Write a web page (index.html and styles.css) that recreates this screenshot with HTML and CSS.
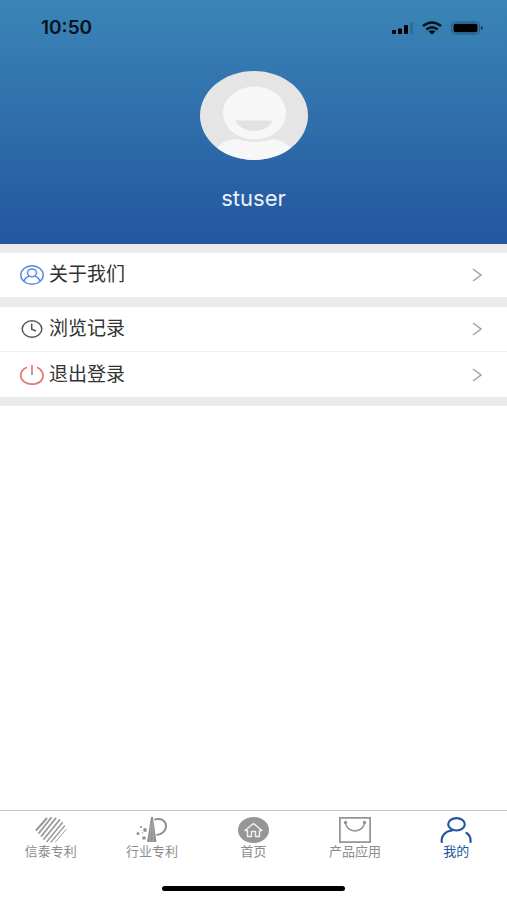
FILE: index.html
```html
<!DOCTYPE html>
<html lang="zh-CN">
<head>
<meta charset="utf-8">
<meta name="viewport" content="width=device-width, initial-scale=1">
<title>我的</title>
<link rel="stylesheet" href="styles.css">
</head>
<body>
<header class="profile">
  <div class="status">
    <time class="clock">10:50</time>
    <div class="signals">
      <svg width="21" height="14" viewBox="0 0 21 14" aria-hidden="true">
        <rect x="0" y="9" width="4" height="4" rx="1"/>
        <rect x="6" y="7.500" width="4" height="5.500" rx="1"/>
        <rect x="12" y="4" width="4" height="9" rx="1"/>
        <rect x="18" y="1" width="3" height="12" rx="1" opacity=".16"/>
      </svg>
      <svg width="20" height="14" viewBox="0 0 20 14" aria-hidden="true">
        <g fill="none" stroke="#06121c" stroke-width="2.400"><path d="M1 5Q10-2 19 5"/><path d="M4.300 8.500Q10 4 15.700 8.500"/></g>
        <path d="M6.500 10.500Q10 7.800 13.500 10.500L10 13.600Z"/>
      </svg>
      <svg width="32" height="14" viewBox="0 0 32 14" aria-hidden="true">
        <rect x=".6" y="1" width="28" height="12" rx="4" fill="none" stroke="#163f61" stroke-opacity=".65"/>
        <rect x="2.500" y="2.800" width="24" height="8.400" rx="2"/>
        <path d="M30 5Q32 6 32 7T30 9Z" opacity=".6"/>
      </svg>
    </div>
  </div>
  <svg class="avatar" width="108" height="89" viewBox="0 0 108 89" role="img" aria-label="头像">
    <defs><clipPath id="face"><ellipse cx="54" cy="44.500" rx="54" ry="44.500"/></clipPath></defs>
    <g clip-path="url(#face)">
      <rect width="108" height="89" fill="#e5e5e5"/>
      <path d="M15 79Q24 68 36 68Q54 74 73 68Q84 69 93 79V89H15Z" fill="#f7f7f7"/>
      <ellipse cx="54.500" cy="42" rx="31.500" ry="26.500" fill="#f7f7f7"/>
      <path d="M35 49.500H73Q67 60 54 60T35 49.500Z" fill="#e2e2e2"/>
    </g>
  </svg>
  <h1 class="name">stuser</h1>
</header>
<main class="menu">
  <nav class="group">
    <a class="row" href="#about">
      <svg width="24" height="20" viewBox="0 0 24 20" fill="none" stroke="#5b87dc" stroke-width="1.500" aria-hidden="true">
        <ellipse cx="12" cy="10" rx="11.200" ry="9.200"/><ellipse cx="12" cy="7.800" rx="4.500" ry="3.900"/><path d="M4 16.300Q5 12.300 9.500 11.100M14.500 11.100Q19 12.300 20 16.300"/>
      </svg>
      <span class="label">关于我们</span>
      <svg class="chevron" width="10" height="14" viewBox="0 0 10 14" aria-hidden="true"><path d="M1 1L9 7L1 13"/></svg>
    </a>
  </nav>
  <nav class="group">
    <a class="row" href="#history">
      <svg width="24" height="20" viewBox="0 0 24 20" fill="none" stroke="#555" stroke-width="1.500" aria-hidden="true">
        <ellipse cx="12" cy="10" rx="9.800" ry="8.200"/><path d="M11.700 4.500V10.300L16 12"/>
      </svg>
      <span class="label">浏览记录</span>
      <svg class="chevron" width="10" height="14" viewBox="0 0 10 14" aria-hidden="true"><path d="M1 1L9 7L1 13"/></svg>
    </a>
    <a class="row" href="#logout">
      <svg width="24" height="20" viewBox="0 0 24 20" fill="none" stroke="#e87575" stroke-width="1.700" aria-hidden="true">
        <path d="M7 2.300C-1.500 6-.5 14 5 17.200S19 20 22.300 14C24.500 9.500 22 4.500 17 2.300M12 0V10"/>
      </svg>
      <span class="label">退出登录</span>
      <svg class="chevron" width="10" height="14" viewBox="0 0 10 14" aria-hidden="true"><path d="M1 1L9 7L1 13"/></svg>
    </a>
  </nav>
</main>
<footer class="dock">
  <nav class="tabs">
    <a class="tab" href="#xintai">
      <svg width="32" height="26" viewBox="0 0 32 26" aria-hidden="true">
        <g fill="none" stroke="#999" stroke-linecap="round">
          <path d="M1.500 13L11.500 1.500" stroke-width="2"/><path d="M4 16L16 1" stroke-width="2"/><path d="M6.500 19L20.500 1.500" stroke-width="1.900"/><path d="M9 22L24.500 3" stroke-width="1.800"/><path d="M12 24.500L27.500 5.500" stroke-width="1.500"/><path d="M16 25L29.500 9" stroke-width="1.200"/><path d="M20.500 25L31 12.500" stroke-width=".9"/>
        </g>
      </svg>
      <span>信泰专利</span>
    </a>
    <a class="tab" href="#industry">
      <svg width="32" height="26" viewBox="0 0 32 26" fill="#919191" aria-hidden="true">
        <path d="M15 0H17L20.500 25H11Z"/><path d="M15 6L14 25M16.800 3L17.300 25" stroke="#bdbdbd" stroke-width=".6"/>
        <path d="M18.500 2.500C26 1 30 4 30 9C30 14 25.500 17.500 20.500 18" fill="none" stroke="#919191" stroke-width="2"/>
        <circle cx="5" cy="10" r="1.100"/><circle cx="9" cy="13" r="1.900"/><circle cx="2" cy="16.500" r="1.500"/><circle cx="6.500" cy="16" r=".7"/><circle cx="8" cy="21" r="1.800"/>
      </svg>
      <span>行业专利</span>
    </a>
    <a class="tab" href="#home">
      <svg width="32" height="26" viewBox="0 0 32 26" aria-hidden="true">
        <ellipse cx="16.500" cy="13" rx="15.500" ry="13" fill="#969696"/>
        <path d="M8 13.500L16.500 6.500L25 13.500H22.500V19.500H18.500V14.500H14.500V19.500H10.500V13.500Z" fill="none" stroke="#f2f2f2" stroke-width="1.400" stroke-linejoin="round"/>
      </svg>
      <span>首页</span>
    </a>
    <a class="tab" href="#products">
      <svg width="32" height="26" viewBox="0 0 32 26" fill="none" stroke="#929292" aria-hidden="true">
        <rect x=".9" y=".9" width="30.200" height="24.200" stroke-width="1.700"/><path d="M6.500 6C8 16.500 24 16.500 25.500 6" stroke-width="1.500"/>
        <g fill="#929292" stroke="none"><circle cx="6.500" cy="5.500" r="1.700"/><circle cx="25.500" cy="5.500" r="1.700"/></g>
      </svg>
      <span>产品应用</span>
    </a>
    <a class="tab active" href="#mine" aria-current="page">
      <svg width="32" height="26" viewBox="0 0 32 26" fill="none" stroke="#2456a0" stroke-width="2.200" stroke-linecap="round" aria-hidden="true">
        <ellipse cx="16.500" cy="7.300" rx="8.300" ry="6.200"/><path d="M1.800 25C1 19 5 14 12 13.500M26.500 16Q31 18.500 30.500 25"/>
      </svg>
      <span>我的</span>
    </a>
  </nav>
  <div class="home-bar"></div>
</footer>
</body>
</html>
```
FILE: styles.css
```css
* {
  box-sizing: border-box;
}

body {
  margin: 0;
  min-height: 100vh;
  display: flex;
  flex-direction: column;
  background: #fff;
  font-family: Inter, "Noto Sans CJK SC", sans-serif;
  color: #333;
}

a {
  color: inherit;
  text-decoration: none;
}

svg {
  display: block;
  flex: none;
}

.profile {
  display: flex;
  flex-direction: column;
  align-items: center;
  padding-bottom: 32px;
  background: linear-gradient(#3a85b7, #3478b0 28%, #2456a0);
}

.status {
  align-self: stretch;
  display: flex;
  justify-content: space-between;
  align-items: center;
  padding: 16px 24px 0 41px;
  color: #06121c;
}

.clock {
  font-size: 19px;
  font-weight: 600;
  line-height: 24px;
}

.signals {
  display: flex;
  align-items: center;
  gap: 9px;
}

.avatar {
  margin-top: 31px;
}

.name {
  margin: 24px 0 0;
  font-size: 22px;
  font-weight: 400;
  line-height: 28px;
  color: #e9f1fb;
}

.menu {
  flex: 1;
}

.group {
  border-top: 9px solid #ebebeb;
}

.group:last-child {
  border-top-width: 10px;
  border-bottom: 9px solid #ebebeb;
}

.row {
  display: flex;
  align-items: center;
  gap: 5px;
  height: 44px;
  padding: 0 25px 0 20px;
}

.row + .row {
  height: 46px;
  border-top: 1px solid #f0f0f0;
}

.label {
  flex: 1;
  font-size: 19px;
  line-height: 28px;
}

.chevron {
  fill: none;
  stroke: #a2a2a2;
  stroke-width: 1.5;
}

.dock {
  border-top: 1px solid #c4c4c4;
}

.tabs {
  display: grid;
  grid-template-columns: repeat(5, 1fr);
  padding-top: 6px;
}

.tab {
  display: flex;
  flex-direction: column;
  align-items: center;
  font-size: 13px;
  line-height: 16px;
  color: #8c8c8c;
}

.active {
  color: #2456a0;
}

.home-bar {
  width: 36%;
  height: 5px;
  margin: 27px auto 9px;
  border-radius: 3px;
  background: #000;
}
```
